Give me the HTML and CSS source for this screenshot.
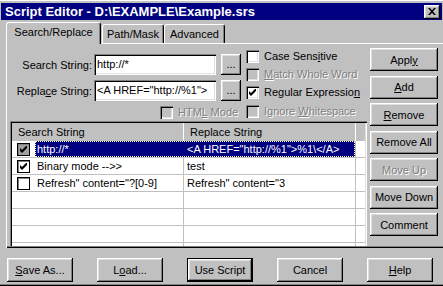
FILE: index.html
```html
<!DOCTYPE html>
<html lang="en">
<head>
  <meta charset="UTF-8" />
  <title>Script Editor</title>
  <link rel="stylesheet" href="styles.css">
</head>
<body>

  <div class="window">
    <div class="titlebar">
      <span class="title">Script Editor - D:\EXAMPLE\Example.srs</span>
      <span class="close">
        <svg width="8" height="7" viewBox="0 0 8 7"><path d="M0 0h2l2 2.3 2-2.3h2l-3 3.5 3 3.5h-2l-2-2.3-2 2.3h-2l3-3.5z" /></svg>
      </span>
    </div>

    <div class="tabs">
      <div class="tab active">Search/Replace</div>
      <div class="tab path">Path/Mask</div>
      <div class="tab adv">Advanced</div>
    </div>

    <div class="panel">
      <div class="main">
        <div class="top">
          <div class="fields">
            <div class="field">
              <span class="caption">Search String:</span>
              <span class="edit">http://*</span>
              <button class="btn dots">...</button>
            </div>
            <div class="field">
              <span class="caption">Repla<u>c</u>e String:</span>
              <span class="edit">&lt;A HREF="http://%1"&gt;</span>
              <button class="btn dots">...</button>
            </div>
            <div class="check html-mode disabled">
              <span class="box"></span>
              <span>HTM<u>L</u> Mode</span>
            </div>
          </div>

          <div class="options">
            <div class="check opt">
              <span class="box"></span>
              <span>Case Sens<u>i</u>tive</span>
            </div>
            <div class="check opt disabled">
              <span class="box"></span>
              <span><u>M</u>atch Whole Word</span>
            </div>
            <div class="check opt tall">
              <span class="box"><svg class="tick" viewBox="0 0 7 7"><polygon points="0,2 2,4 7,-1 7,2 2,7 0,5" /></svg></span>
              <span>Regular Expressio<u>n</u></span>
            </div>
            <div class="check opt disabled">
              <span class="box"></span>
              <span>Ignore <u>W</u>hitespace</span>
            </div>
          </div>
        </div>

        <div class="list">
          <div class="head">
            <div class="h1">Search String</div>
            <div class="h2">Replace String</div>
            <div class="h3"></div>
          </div>
          <div class="row">
            <div class="ck"><span class="box flat grey"><svg class="tick" viewBox="0 0 7 7"><polygon points="0,2 2,4 7,-1 7,2 2,7 0,5" /></svg></span></div>
            <div class="cells sel">
              <div class="c1">http://*</div>
              <div class="c2">&lt;A HREF="http://%1"&gt;%1\&lt;/A&gt;</div>
            </div>
            <div class="c3"></div>
          </div>
          <div class="row">
            <div class="ck"><span class="box flat"><svg class="tick" viewBox="0 0 7 7"><polygon points="0,2 2,4 7,-1 7,2 2,7 0,5" /></svg></span></div>
            <div class="cells">
              <div class="c1">Binary mode --&gt;&gt;</div>
              <div class="c2">test</div>
            </div>
            <div class="c3"></div>
          </div>
          <div class="row">
            <div class="ck"><span class="box flat"></span></div>
            <div class="cells">
              <div class="c1">Refresh" content="?[0-9]</div>
              <div class="c2">Refresh" content="3</div>
            </div>
            <div class="c3"></div>
          </div>
          <div class="row"><div class="ck"></div><div class="cells"><div class="c1"></div><div class="c2"></div></div><div class="c3"></div></div>
          <div class="row"><div class="ck"></div><div class="cells"><div class="c1"></div><div class="c2"></div></div><div class="c3"></div></div>
          <div class="row"><div class="ck"></div><div class="cells"><div class="c1"></div><div class="c2"></div></div><div class="c3"></div></div>
          <div class="row"><div class="ck"></div><div class="cells"><div class="c1"></div><div class="c2"></div></div><div class="c3"></div></div>
        </div>
      </div>

      <div class="side">
        <button class="btn">Appl<u>y</u></button>
        <button class="btn"><u>A</u>dd</button>
        <button class="btn"><u>R</u>emove</button>
        <button class="btn">Remove All</button>
        <button class="btn disabled">Move Up</button>
        <button class="btn">Move Down</button>
        <button class="btn">Comment</button>
      </div>
    </div>

    <div class="footer">
      <button class="btn"><u>S</u>ave As...</button>
      <button class="btn">L<u>o</u>ad...</button>
      <button class="btn default">Use Script</button>
      <button class="btn">Cancel</button>
      <button class="btn"><u>H</u>elp</button>
    </div>
  </div>

</body>
</html>
```

FILE: styles.css
```css
* {
  box-sizing: border-box;
}

body {
  margin: 0;
  width: 443px;
  height: 286px;
  overflow: hidden;
  background-color: #c0c0c0;
  font-family: "Liberation Sans", Arial, sans-serif;
  font-size: 11px;
  color: #000;
}

u {
  text-decoration-thickness: 1px;
  text-underline-offset: 1px;
}

.window {
  height: 286px;
  padding: 2px 1px 2px 1px;
  border-top: 1px solid #fff;
  box-shadow: inset 0 -1px #000, inset 0 -2px #808080;
}

/* title bar */

.titlebar {
  height: 17px;
  background-color: #000080;
  color: #fff;
  display: flex;
  align-items: center;
  justify-content: space-between;
  padding: 0 2px 0 4px;
  font-weight: bold;
  font-size: 13px;
}

.close {
  width: 16px;
  height: 14px;
  margin-top: 1px;
  background-color: #c0c0c0;
  box-shadow: inset -1px -1px #000, inset 1px 1px #fff, inset -2px -2px #808080, inset 2px 2px #dfdfdf;
  display: flex;
  align-items: center;
  justify-content: center;
}

.close svg {
  fill: #000;
  margin-top: -1px;
}

/* tabs */

.tabs {
  height: 23px;
  display: flex;
  align-items: flex-end;
  padding-left: 5px;
}

.tab {
  height: 19px;
  padding-top: 3px;
  line-height: 13px;
  text-align: center;
  border: 1px solid;
  border-color: #fff #000 transparent #fff;
  border-bottom: none;
  border-radius: 3px 3px 0 0;
  box-shadow: inset -1px 0 #808080;
}

.tab.active {
  width: 95px;
  height: 22px;
  margin-bottom: -1px;
  position: relative;
  z-index: 1;
  background-color: #c0c0c0;
}

.tab.path {
  width: 62px;
  margin-left: 1px;
}

.tab.adv {
  width: 61px;
}

/* tab page */

.panel {
  width: 437px;
  height: 205px;
  margin-left: 5px;
  border-top: 1px solid #fff;
  border-left: 1px solid #fff;
  box-shadow: inset 0 -1px #000, inset 0 -2px #808080;
  display: flex;
}

.main {
  width: 360px;
}

.top {
  height: 77px;
  display: flex;
}

.fields {
  width: 234px;
  padding-top: 10px;
}

.field {
  height: 21px;
  margin-bottom: 5px;
  display: flex;
  align-items: center;
}

.caption {
  width: 87px;
  padding-right: 2px;
  text-align: right;
  white-space: nowrap;
}

.edit {
  width: 122px;
  height: 21px;
  padding: 0 3px;
  line-height: 21px;
  background-color: #fff;
  white-space: nowrap;
  overflow: hidden;
  box-shadow: inset 1px 1px #808080, inset 2px 2px #000, inset -1px -1px #fff, inset -2px -2px #dfdfdf;
}

.btn {
  background-color: #c0c0c0;
  border: none;
  padding: 0;
  font: inherit;
  color: #000;
  box-shadow: inset -1px -1px #000, inset 1px 1px #fff, inset -2px -2px #808080, inset 2px 2px #dfdfdf;
}

.btn.dots {
  width: 20px;
  height: 21px;
  margin-left: 5px;
  line-height: 15px;
}

.btn.default {
  box-shadow: inset 0 0 0 1px #000, inset -2px -2px #000, inset 2px 2px #fff, inset -3px -3px #808080, inset 3px 3px #dfdfdf;
}

.disabled {
  color: #808080;
  text-shadow: 1px 1px 0 #fff;
}

/* checkboxes */

.check {
  display: flex;
  align-items: center;
  gap: 5px;
  line-height: 13px;
  white-space: nowrap;
}

.box {
  width: 13px;
  height: 13px;
  flex: none;
  background-color: #fff;
  box-shadow: inset 1px 1px #808080, inset 2px 2px #000, inset -1px -1px #fff, inset -2px -2px #dfdfdf;
  display: flex;
  align-items: center;
  justify-content: center;
}

.disabled .box {
  background-color: #c0c0c0;
}

.tick {
  width: 7px;
  height: 7px;
  fill: #000;
}

.html-mode {
  margin-left: 153px;
}

.options {
  margin-left: 5px;
  padding-top: 6px;
}

.opt {
  height: 18px;
  align-items: flex-start;
}

.opt.tall {
  height: 19px;
}

/* list view */

.list {
  width: 357px;
  height: 125px;
  margin-left: 3px;
  padding: 2px 2px 0 2px;
  background-color: #fff;
  overflow: hidden;
  box-shadow: inset 1px 1px #808080, inset 2px 2px #000, inset -1px 0 #fff, inset -2px 0 #dfdfdf;
}

.head {
  height: 18px;
  line-height: 18px;
  display: flex;
  background-color: #c0c0c0;
}

.h1 {
  width: 171px;
  padding-left: 6px;
}

.h2 {
  width: 172px;
  padding-left: 6px;
  border-left: 1px solid #fff;
}

.h3 {
  width: 10px;
  border-left: 1px solid #fff;
}

.row {
  height: 17px;
  line-height: 16px;
  display: flex;
  border-bottom: 1px solid #c0c0c0;
  white-space: nowrap;
}

.ck {
  width: 23px;
  padding: 2px 0 0 5px;
}

.box.flat {
  box-shadow: inset 0 0 0 1px #000, inset 2px 2px #808080;
}

.box.grey {
  background-color: #a0a0a0;
}

.cells {
  width: 320px;
  display: flex;
}

.c1 {
  width: 148px;
  padding-left: 2px;
  overflow: hidden;
}

.c2 {
  width: 172px;
  padding-left: 3px;
  border-left: 1px solid #c0c0c0;
  overflow: hidden;
}

.c3 {
  width: 10px;
  border-left: 1px solid #c0c0c0;
}

.cells.sel {
  background-color: #000080;
  color: #fff;
  outline: 1px dotted #ffffa0;
  outline-offset: -1px;
}

.sel .c2 {
  border-left-color: #000080;
}

/* right hand buttons */

.side {
  width: 68px;
  margin-left: 3px;
  padding-top: 4px;
  display: flex;
  flex-direction: column;
  gap: 4.5px;
}

.side .btn {
  height: 23px;
}

/* bottom buttons */

.footer {
  height: 36px;
  padding: 10px 0 0 6px;
  display: flex;
  gap: 24px;
}

.footer .btn {
  width: 66px;
  height: 24px;
}
```
